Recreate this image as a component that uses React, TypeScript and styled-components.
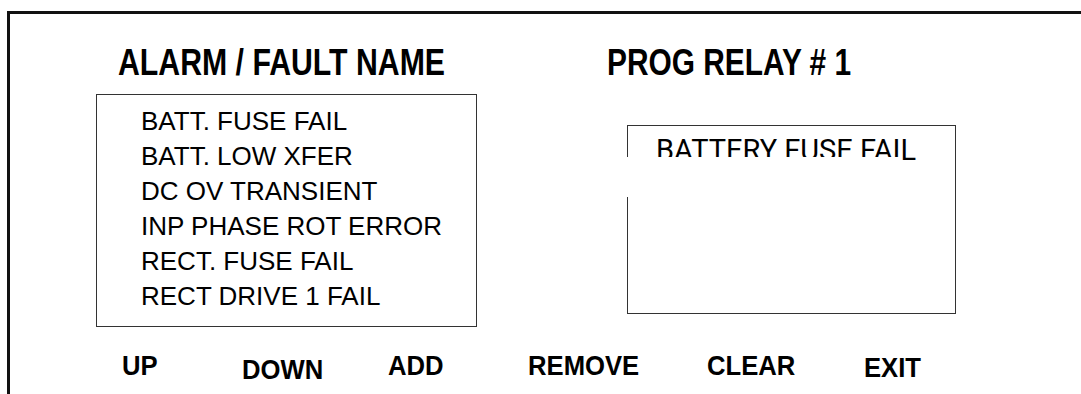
import React from "react";
import styled, { createGlobalStyle } from "styled-components";

const GlobalStyle = createGlobalStyle`
  html, body {
    margin: 0;
    padding: 0;
    background: #fff;
    overflow: hidden;
  }
`;

const Frame = styled.div`
  box-sizing: border-box;
  margin: 11px 0 0 7px;
  width: 1100px;
  height: 383px;
  border-top: 3px solid #111;
  border-left: 3px solid #111;
  padding: 29px 0 0 86px;
  color: #000;
`;

const Panels = styled.div`
  display: grid;
  grid-template-columns: 381px 349px;
  column-gap: 130px;
  align-items: start;
`;

const Column = styled.div`
  display: flex;
  flex-direction: column;
`;

// no narrow face installed, so the bold sans is squeezed sideways
const Narrow = styled.span<{ $squeeze: number }>`
  display: inline-block;
  transform: scaleX(${(p) => p.$squeeze});
  transform-origin: left center;
`;

const Heading = styled.h1<{ $indent: number }>`
  margin: 0 0 0 ${(p) => p.$indent}px;
  font-family: "Liberation Sans", Arial, sans-serif;
  font-weight: 700;
  font-size: 36px;
  line-height: 40px;
  white-space: nowrap;
`;

const ListBox = styled.ul`
  box-sizing: border-box;
  list-style: none;
  width: 381px;
  height: 233px;
  margin: 11px 0 0 0;
  padding: 9px 0 0 44px;
  border: 1px solid #333;
  font-family: "Liberation Sans", Arial, sans-serif;
  font-size: 26px;
  line-height: 35px;
`;

const ListItem = styled.li`
  white-space: nowrap;
`;

const RelayBox = styled.div`
  position: relative;
  box-sizing: border-box;
  width: 329px;
  height: 189px;
  margin: 42px 0 0 20px;
  padding: 7px 0 0 28px;
  border: 1px solid #333;
  font-family: Roboto, "Liberation Sans", sans-serif;
  font-size: 29px;
  line-height: 34px;
  white-space: nowrap;
`;

/* the white strip that hides the bottom of the entry and part of the border */
const Smudge = styled.div`
  position: absolute;
  left: -10px;
  top: 31px;
  width: 281px;
  height: 40px;
  background: #fff;
`;

const Toolbar = styled.div`
  display: grid;
  grid-template-columns: 120px 146px 140px 179px 157px auto;
  align-items: start;
  margin: 24px 0 0 26px;
`;

const Key = styled.div<{ $drop?: number }>`
  margin-top: ${(p) => p.$drop ?? 0}px;
  font-family: "Liberation Sans", Arial, sans-serif;
  font-weight: 700;
  font-size: 27px;
  line-height: 30px;
  white-space: nowrap;
`;

const faults = [
  "BATT. FUSE FAIL",
  "BATT. LOW XFER",
  "DC OV TRANSIENT",
  "INP PHASE ROT ERROR",
  "RECT. FUSE FAIL",
  "RECT DRIVE 1 FAIL",
];

const keys = [
  { label: "UP", drop: 0 },
  { label: "DOWN", drop: 4 },
  { label: "ADD", drop: 0 },
  { label: "REMOVE", drop: 0 },
  { label: "CLEAR", drop: 0 },
  { label: "EXIT", drop: 2 },
];

const App = () => {
  return (
    <>
      <GlobalStyle />
      <Frame>
        <Panels>
          <Column>
            <Heading $indent={22}>
              <Narrow $squeeze={0.84}>ALARM / FAULT NAME</Narrow>
            </Heading>
            <ListBox>
              {faults.map((f) => (
                <ListItem key={f}>{f}</ListItem>
              ))}
            </ListBox>
          </Column>
          <Column>
            <Heading $indent={0}>
              <Narrow $squeeze={0.83}>PROG RELAY # 1</Narrow>
            </Heading>
            <RelayBox>
              BATTERY FUSE FAIL
              <Smudge />
            </RelayBox>
          </Column>
        </Panels>
        <Toolbar>
          {keys.map((k) => (
            <Key key={k.label} $drop={k.drop}>
              <Narrow $squeeze={0.95}>{k.label}</Narrow>
            </Key>
          ))}
        </Toolbar>
      </Frame>
    </>
  );
};

export default App;
